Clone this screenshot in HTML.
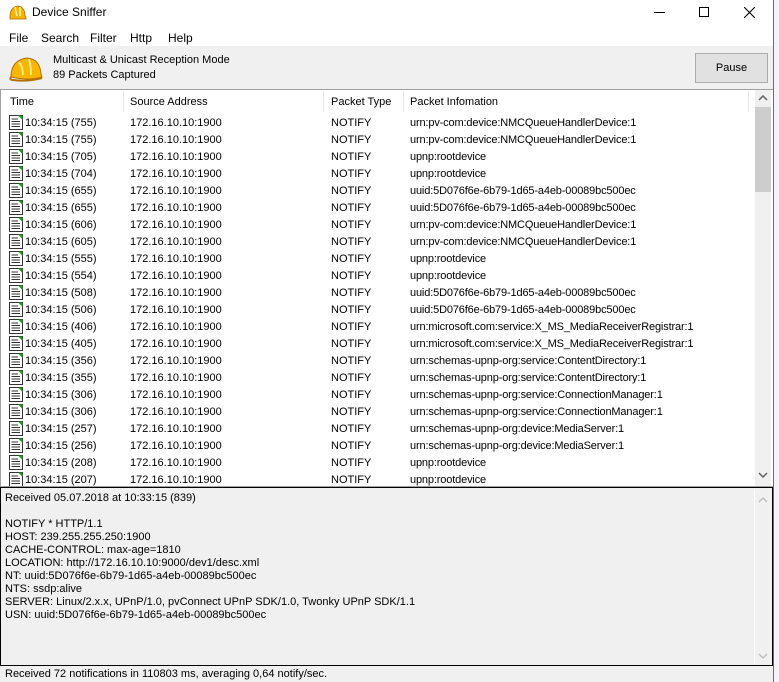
<!DOCTYPE html><html><head><style>
*{margin:0;padding:0;box-sizing:border-box}
body{width:779px;height:682px;overflow:hidden;background:#fff;font-family:"Liberation Sans",sans-serif;font-size:11px;color:#000;position:relative}
.a{position:absolute}
.row{position:absolute;left:0;height:17px;line-height:17px;white-space:nowrap}
.row span{position:absolute}
</style></head><body>
<div class="a" style="left:0;top:0;width:773px;height:682px;background:#fff"></div>
<div class="a" style="left:773px;top:0;width:1px;height:682px;background:#2b7bd6"></div>
<div class="a" style="left:774px;top:0;width:5px;height:682px;background:#f4f4f4"></div>
<svg class="a" style="left:9px;top:4px" width="18" height="16" viewBox="0 0 18 16"><path d="M1 13 Q1 3 9 2 Q16 3 16 12 L17 13 L17 15 L1 15Z" fill="#f5b400" stroke="#a56a00" stroke-width=".8"/><path d="M6 3 L8 12 M11 3 L11 12" stroke="#fff3a0" stroke-width="1.5"/></svg>
<div class="a" style="left:32px;top:5px;font-size:12px">Device Sniffer</div>
<div class="a" style="left:654px;top:12px;width:11px;height:1px;background:#000"></div>
<div class="a" style="left:699px;top:7px;width:10px;height:10px;border:1px solid #000"></div>
<svg class="a" style="left:744px;top:7px" width="11" height="11"><path d="M0 0L11 11M11 0L0 11" stroke="#000" stroke-width="1.1"/></svg>
<div class="a" style="left:9px;top:31px;font-size:12px">File</div>
<div class="a" style="left:41px;top:31px;font-size:12px">Search</div>
<div class="a" style="left:90px;top:31px;font-size:12px">Filter</div>
<div class="a" style="left:130px;top:31px;font-size:12px">Http</div>
<div class="a" style="left:168px;top:31px;font-size:12px">Help</div>
<div class="a" style="left:0;top:46px;width:773px;height:43px;background:#f0f0f0"></div>
<svg class="a" style="left:9px;top:55px" width="34" height="27" viewBox="0 0 34 27"><path d="M2 22 Q2 5 18 3 Q31 4 32 19 L33 22 Q20 26 2 22Z" fill="#f7b600" stroke="#b57000" stroke-width="1"/><path d="M2 22 Q0 25 4 25 Q18 27 33 23" fill="none" stroke="#b57000" stroke-width="2"/><path d="M10 7 Q14 12 14 20 M20 4 Q22 11 22 20" stroke="#ffe680" stroke-width="2" fill="none"/></svg>
<div class="a" style="left:53px;top:54px">Multicast &amp; Unicast Reception Mode</div>
<div class="a" style="left:53px;top:69px">89 Packets Captured</div>
<div class="a" style="left:695px;top:53px;width:73px;height:30px;border:1px solid #adadad;background:#e1e1e1;text-align:center;line-height:28px">Pause</div>
<div class="a" style="left:0;top:89px;width:773px;height:1px;background:#a0a0a0"></div>
<div class="a" style="left:0;top:90px;width:1px;height:397px;background:#a0a0a0"></div>
<div class="a" style="left:0;top:486px;width:773px;height:1px;background:#a0a0a0"></div>
<div class="a" style="left:123px;top:91px;width:1px;height:21px;background:#e5e5e5"></div>
<div class="a" style="left:323px;top:91px;width:1px;height:21px;background:#e5e5e5"></div>
<div class="a" style="left:403px;top:91px;width:1px;height:21px;background:#e5e5e5"></div>
<div class="a" style="left:748px;top:91px;width:1px;height:21px;background:#e5e5e5"></div>
<div class="a" style="left:10px;top:96px">Time</div>
<div class="a" style="left:130px;top:96px">Source Address</div>
<div class="a" style="left:331px;top:96px">Packet Type</div>
<div class="a" style="left:410px;top:96px">Packet Infomation</div>
<div class="a" style="left:755px;top:90px;width:16px;height:396px;background:#f0f0f0"></div>
<div class="a" style="left:755px;top:107px;width:16px;height:85px;background:#cdcdcd"></div>
<svg class="a" style="left:758px;top:95px" width="10" height="6"><path d="M1 5L5 1L9 5" stroke="#606060" stroke-width="1.5" fill="none"/></svg>
<svg class="a" style="left:758px;top:472px" width="10" height="6"><path d="M1 1L5 5L9 1" stroke="#606060" stroke-width="1.5" fill="none"/></svg>
<div id="rows"></div>
<div class="a" style="left:0;top:487px;width:773px;height:179px;background:#f0f0f0;border:1px solid #000"></div>
<div class="a" style="left:754px;top:489px;width:1px;height:175px;background:#fff"></div>
<svg class="a" style="left:758px;top:497px" width="10" height="6"><path d="M1 5L5 1L9 5" stroke="#c0c0c0" stroke-width="1.5" fill="none"/></svg>
<svg class="a" style="left:758px;top:653px" width="10" height="6"><path d="M1 1L5 5L9 1" stroke="#c0c0c0" stroke-width="1.5" fill="none"/></svg>
<div class="a" style="left:5px;top:492px;line-height:13px;white-space:pre">Received 05.07.2018 at 10:33:15 (839)

NOTIFY * HTTP/1.1
HOST: 239.255.255.250:1900
CACHE-CONTROL: max-age=1810
LOCATION: http://172.16.10.10:9000/dev1/desc.xml
NT: uuid:5D076f6e-6b79-1d65-a4eb-00089bc500ec
NTS: ssdp:alive
SERVER: Linux/2.x.x, UPnP/1.0, pvConnect UPnP SDK/1.0, Twonky UPnP SDK/1.1
USN: uuid:5D076f6e-6b79-1d65-a4eb-00089bc500ec</div>
<div class="a" style="left:0;top:666px;width:773px;height:16px;background:#f0f0f0"></div>
<div class="a" style="left:5px;top:668px">Received 72 notifications in 110803 ms, averaging 0,64 notify/sec.</div>
<script>
var d=[["755","urn:pv-com:device:NMCQueueHandlerDevice:1"],["755","urn:pv-com:device:NMCQueueHandlerDevice:1"],["705","upnp:rootdevice"],["704","upnp:rootdevice"],["655","uuid:5D076f6e-6b79-1d65-a4eb-00089bc500ec"],["655","uuid:5D076f6e-6b79-1d65-a4eb-00089bc500ec"],["606","urn:pv-com:device:NMCQueueHandlerDevice:1"],["605","urn:pv-com:device:NMCQueueHandlerDevice:1"],["555","upnp:rootdevice"],["554","upnp:rootdevice"],["508","uuid:5D076f6e-6b79-1d65-a4eb-00089bc500ec"],["506","uuid:5D076f6e-6b79-1d65-a4eb-00089bc500ec"],["406","urn:microsoft.com:service:X_MS_MediaReceiverRegistrar:1"],["405","urn:microsoft.com:service:X_MS_MediaReceiverRegistrar:1"],["356","urn:schemas-upnp-org:service:ContentDirectory:1"],["355","urn:schemas-upnp-org:service:ContentDirectory:1"],["306","urn:schemas-upnp-org:service:ConnectionManager:1"],["306","urn:schemas-upnp-org:service:ConnectionManager:1"],["257","urn:schemas-upnp-org:device:MediaServer:1"],["256","urn:schemas-upnp-org:device:MediaServer:1"],["208","upnp:rootdevice"],["207","upnp:rootdevice"]];
var h="";d.forEach(function(r,i){var t=115+i*17;h+='<div class="row" style="top:'+t+'px;width:754px;'+(t+17>486?'height:'+(486-t)+'px;overflow:hidden;':'')+'"><svg style="position:absolute;left:9px;top:0px" width="14" height="15"><rect x="0.5" y="0.5" width="13" height="14" fill="#fff" stroke="#333"/><path d="M9 0.5L13.5 0.5L13.5 5Z" fill="#2a9a2a"/><path d="M2.5 4H9M2.5 6.5H11M2.5 9H11M2.5 11.5H11" stroke="#333"/></svg><span style="left:25px">10:34:15 ('+r[0]+')</span><span style="left:130px">172.16.10.10:1900</span><span style="left:331px">NOTIFY</span><span style="left:410px;letter-spacing:-0.15px">'+r[1]+'</span></div>'});
document.getElementById("rows").innerHTML=h;
</script>
</body></html>
